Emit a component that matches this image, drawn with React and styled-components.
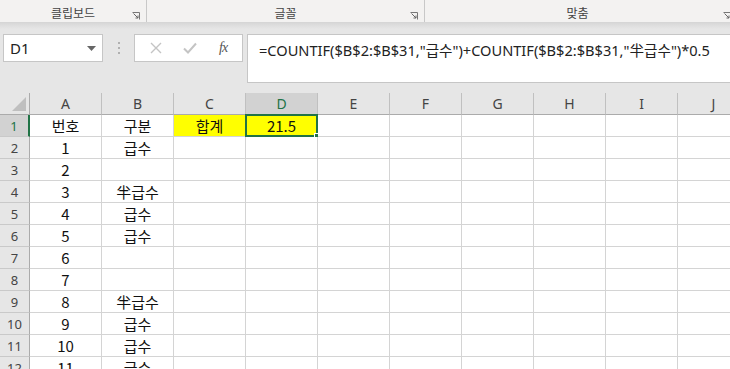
import React from 'react';
import styled, { createGlobalStyle, css } from 'styled-components';

const GlobalStyle = createGlobalStyle`
  html, body {
    margin: 0;
    padding: 0;
    background: #e6e6e6;
    overflow: hidden;
  }
  body {
    width: 730px;
    height: 369px;
    font-family: 'Noto Sans', 'Noto Sans CJK KR', sans-serif;
  }
`;

const green = '#217346';
const gridLine = '#d4d4d4';

const Ribbon = styled.div`
  display: flex;
  height: 23px;
  background: #f3f2f1;
  border-bottom: 1px solid #d6d6d6;
  box-sizing: border-box;
`;

const RibbonGroup = styled.div`
  position: relative;
  display: flex;
  align-items: center;
  justify-content: center;
  width: ${(p) => p.$width}px;
  flex-shrink: 0;
  height: 100%;
  padding-top: 3px;
  border-right: ${(p) => (p.$last ? 'none' : '1px solid #c8c8c8')};
  font-family: 'Noto Sans CJK KR', sans-serif;
  font-size: 12px;
  color: #444;
  box-sizing: border-box;
`;

const Launcher = styled.svg`
  position: absolute;
  right: ${(p) => p.$right ?? 5}px;
  top: 12px;
`;

const Shadow = styled.div`
  height: 6px;
  background: linear-gradient(#d8d8d8, #e6e6e6);
`;

const FormulaArea = styled.div`
  display: flex;
  align-items: flex-start;
  padding: 5px 0 10px 3px;
  height: 49px;
`;

const NameBox = styled.div`
  display: flex;
  align-items: center;
  justify-content: space-between;
  width: 100px;
  height: 28px;
  box-sizing: border-box;
  background: #fff;
  border: 1px solid #c6c6c6;
  padding: 0 6px 0 6px;
  font-size: 15px;
  color: #222;
`;

const Grip = styled.div`
  display: flex;
  flex-direction: column;
  justify-content: center;
  gap: 3px;
  width: 31px;
  height: 28px;
  align-items: center;

  span {
    width: 2px;
    height: 2px;
    background: #b0b0b0;
  }
`;

const ButtonBox = styled.div`
  display: flex;
  align-items: center;
  justify-content: space-around;
  width: 109px;
  height: 28px;
  box-sizing: border-box;
  background: #fff;
  border: 1px solid #c6c6c6;
  padding: 0 4px;
`;

const Fx = styled.span`
  font-family: 'Liberation Serif', serif;
  font-style: italic;
  font-size: 14px;
  color: #555;
  letter-spacing: -1px;
`;

const FormulaBox = styled.div`
  flex: 1;
  margin-left: 4px;
  height: 49px;
  box-sizing: border-box;
  background: #fff;
  border: 1px solid #c6c6c6;
  border-right: none;
  padding: 4px 0 0 11px;
  font-family: 'Noto Sans', 'Noto Sans CJK KR', sans-serif;
  font-size: 14.6px;
  color: #222;
  white-space: nowrap;
  overflow: hidden;
`;

const Sheet = styled.div`
  display: grid;
  grid-template-columns: 30px repeat(10, 72px);
  grid-auto-rows: 22px;
  background: #fff;
`;

const Corner = styled.div`
  position: relative;
  background: #e6e6e6;
  border-right: 1px solid #ababab;
  border-bottom: 1px solid #ababab;
  box-sizing: border-box;

  &::after {
    content: '';
    position: absolute;
    right: 3px;
    bottom: 3px;
    border-left: 14px solid transparent;
    border-bottom: 14px solid #bfbfbf;
  }
`;

const ColHeader = styled.div`
  display: flex;
  align-items: center;
  justify-content: center;
  box-sizing: border-box;
  background: ${(p) => (p.$active ? '#d2d2d2' : '#e6e6e6')};
  border-right: 1px solid #c0c0c0;
  border-bottom: 1px solid #ababab;
  font-size: 14px;
  color: ${(p) => (p.$active ? green : '#444')};
`;

const RowHeader = styled.div`
  display: flex;
  align-items: center;
  justify-content: center;
  box-sizing: border-box;
  background: ${(p) => (p.$active ? '#d2d2d2' : '#e6e6e6')};
  border-right: ${(p) => (p.$active ? `2px solid ${green}` : '1px solid #ababab')};
  border-bottom: 1px solid #c9c9c9;
  font-size: 13px;
  color: ${(p) => (p.$active ? green : '#444')};
`;

const Cell = styled.div`
  position: relative;
  display: flex;
  align-items: center;
  justify-content: center;
  box-sizing: border-box;
  background: ${(p) => p.$fill || '#fff'};
  border-right: 1px solid ${gridLine};
  border-bottom: 1px solid ${gridLine};
  font-family: 'Noto Sans CJK KR', sans-serif;
  font-size: 15px;
  line-height: 1;
  color: #111;

  ${(p) =>
    p.$selected &&
    css`
      &::before {
        content: '';
        position: absolute;
        left: -1px;
        top: -1px;
        right: -1px;
        bottom: -1px;
        border: 2px solid ${green};
      }
      &::after {
        content: '';
        position: absolute;
        right: -4px;
        bottom: -4px;
        width: 5px;
        height: 5px;
        background: ${green};
        border: 1px solid #fff;
      }
    `}
`;

const columns = ['A', 'B', 'C', 'D', 'E', 'F', 'G', 'H', 'I', 'J'];

const rows = [
  ['번호', '구분', '합계', '21.5'],
  ['1', '급수'],
  ['2', ''],
  ['3', '半급수'],
  ['4', '급수'],
  ['5', '급수'],
  ['6', ''],
  ['7', ''],
  ['8', '半급수'],
  ['9', '급수'],
  ['10', '급수'],
  ['11', '급수'],
];

const LauncherIcon = ({ right }) => (
  <Launcher $right={right} width="8" height="8" viewBox="0 0 8 8">
    <path d="M0.5 0.5H7.5V7.5" fill="none" stroke="#777" strokeWidth="1" />
    <path d="M1.5 1.5L6 6M6 3.5V6H3.5" fill="none" stroke="#666" strokeWidth="1" />
  </Launcher>
);

const App = () => (
  <>
    <GlobalStyle />
    <Ribbon>
      <RibbonGroup $width={147}>
        클립보드
        <LauncherIcon right={6} />
      </RibbonGroup>
      <RibbonGroup $width={278}>
        글꼴
        <LauncherIcon right={6} />
      </RibbonGroup>
      <RibbonGroup $width={305} $last>
        맞춤
        <LauncherIcon right={-1} />
      </RibbonGroup>
    </Ribbon>
    <Shadow />
    <FormulaArea>
      <NameBox>
        D1
        <svg width="9" height="5" viewBox="0 0 9 5">
          <path d="M0 0H9L4.5 5Z" fill="#666" />
        </svg>
      </NameBox>
      <Grip>
        <span />
        <span />
        <span />
      </Grip>
      <ButtonBox>
        <svg width="12" height="12" viewBox="0 0 12 12">
          <path d="M1 1L11 11M11 1L1 11" stroke="#c4c4c4" strokeWidth="1.4" />
        </svg>
        <svg width="14" height="12" viewBox="0 0 14 12">
          <path d="M1 6.5L5 10.5L13 1.5" fill="none" stroke="#c4c4c4" strokeWidth="2" />
        </svg>
        <Fx>fx</Fx>
      </ButtonBox>
      <FormulaBox>
        =COUNTIF($B$2:$B$31,"급수")+COUNTIF($B$2:$B$31,"半급수")*0.5
      </FormulaBox>
    </FormulaArea>
    <Sheet>
      <Corner />
      {columns.map((c) => (
        <ColHeader key={c} $active={c === 'D'}>
          {c}
        </ColHeader>
      ))}
      {rows.map((row, r) => (
        <React.Fragment key={r}>
          <RowHeader $active={r === 0}>{r + 1}</RowHeader>
          {columns.map((c, i) => {
            const fill = r === 0 && (c === 'C' || c === 'D') ? '#ffff00' : undefined;
            return (
              <Cell key={c} $fill={fill} $selected={r === 0 && c === 'D'}>
                {row[i] || ''}
              </Cell>
            );
          })}
        </React.Fragment>
      ))}
    </Sheet>
  </>
);

export default App;
